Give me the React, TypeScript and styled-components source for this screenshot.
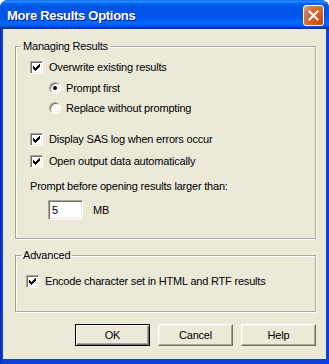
import styled, { createGlobalStyle } from "styled-components";

const GlobalStyle = createGlobalStyle`
  html, body {
    margin: 0;
    padding: 0;
    background: #ffffff;
  }
  body {
    font-family: "Liberation Sans", Arial, sans-serif;
    font-size: 11px;
    color: #000000;
  }
`;

// classic 7x7 check mark, one rect per lit pixel
const CHECK_PIXELS = [
  "......X",
  ".....XX",
  "X...XXX",
  "XX.XXX.",
  "XXXXX..",
  ".XXX...",
  "..X....",
];

function CheckGlyph() {
  return (
    <svg width="7" height="7" viewBox="0 0 7 7" shapeRendering="crispEdges">
      {CHECK_PIXELS.flatMap((row, y) =>
        row.split("").map((c, x) => (c === "X" ? <rect key={`${x}-${y}`} x={x} y={y} width="1" height="1" fill="#000" /> : null))
      )}
    </svg>
  );
}

function CheckBox({ label }: { label: string }) {
  return (
    <OptionRow>
      <Box>
        <CheckGlyph />
      </Box>
      <OptionText>{label}</OptionText>
    </OptionRow>
  );
}

function Radio({ label, checked }: { label: string; checked?: boolean }) {
  return (
    <OptionRow $indent={19}>
      <RadioCircle>{checked && <RadioDot />}</RadioCircle>
      <OptionText $gap={5}>{label}</OptionText>
    </OptionRow>
  );
}

export default function App() {
  return (
    <>
      <GlobalStyle />
      <Window>
        <TitleBar>
          <Title>More Results Options</Title>
          <CloseButton>
            <svg width="11" height="11" viewBox="0 0 11 11">
              <path d="M1.5 1.5 L9.5 9.5 M9.5 1.5 L1.5 9.5" stroke="#fff" strokeWidth="2" strokeLinecap="square" />
            </svg>
          </CloseButton>
        </TitleBar>
        <Body>
          <Group>
            <Legend>Managing Results</Legend>
            <GroupBody $padLeft={14} $padTop={7} $padBottom={18}>
              <CheckBox label="Overwrite existing results" />
              <Spacer $h={5} />
              <Radio label="Prompt first" checked />
              <Spacer $h={4} />
              <Radio label="Replace without prompting" />
              <Spacer $h={15} />
              <CheckBox label="Display SAS log when errors occur" />
              <Spacer $h={6} />
              <CheckBox label="Open output data automatically" />
              <Spacer $h={9} />
              <PlainText>Prompt before opening results larger than:</PlainText>
              <Spacer $h={6} />
              <SizeRow>
                <TextInput>5</TextInput>
                <Unit>MB</Unit>
              </SizeRow>
            </GroupBody>
          </Group>
          <Group $top={10}>
            <Legend>Advanced</Legend>
            <GroupBody $padLeft={10} $padTop={12} $padBottom={22}>
              <CheckBox label="Encode character set in HTML and RTF results" />
            </GroupBody>
          </Group>
          <ButtonRow>
            <PushButton $default>OK</PushButton>
            <PushButton>Cancel</PushButton>
            <PushButton>Help</PushButton>
          </ButtonRow>
        </Body>
      </Window>
    </>
  );
}

const Window = styled.div`
  width: 329px;
  height: 364px;
  box-sizing: border-box;
  display: flex;
  flex-direction: column;
  border-radius: 8px 8px 0 0;
  overflow: hidden;
  background: linear-gradient(90deg, #0019cf 0px, #0842d8 2px, #0842d8 100%);
`;

const TitleBar = styled.div`
  height: 29px;
  flex: 0 0 29px;
  display: flex;
  align-items: center;
  justify-content: space-between;
  padding: 0 5px 0 7px;
  box-sizing: border-box;
  background: linear-gradient(
    180deg,
    #0058ee 0%,
    #3593ff 4%,
    #288eff 6%,
    #127dff 8%,
    #036ffc 10%,
    #0262ee 14%,
    #0057e5 20%,
    #0054e3 24%,
    #0055eb 56%,
    #005bf5 66%,
    #026afe 76%,
    #0062ef 86%,
    #0052d6 92%,
    #0040ab 94%,
    #003092 100%
  );
`;

const Title = styled.div`
  font-family: "Liberation Sans", Arial, sans-serif;
  font-weight: bold;
  font-size: 13px;
  letter-spacing: -0.3px;
  color: #ffffff;
  text-shadow: 1px 1px 0 #0a1883;
  margin-top: 1px;
`;

const CloseButton = styled.div`
  width: 21px;
  height: 21px;
  box-sizing: border-box;
  border: 1px solid #ffffff;
  border-radius: 3px;
  display: flex;
  align-items: center;
  justify-content: center;
  margin-top: 2px;
  background: radial-gradient(circle at 90% 90%, #cc4600 0%, #dc6527 55%, #cd7546 70%, #e5a07c 100%);
`;

const Body = styled.div`
  flex: 1;
  margin: 0 3px 5px 3px;
  padding: 11px 10px 0 12px;
  background: #ece9d8;
  display: flex;
  flex-direction: column;
`;

const Group = styled.fieldset<{ $top?: number }>`
  margin: ${(p) => p.$top ?? 0}px 0 0 0;
  padding: 0;
  min-width: 0;
  border: 1px solid #aca899;
  box-shadow: inset 1px 1px 0 #ffffff, 1px 1px 0 #ffffff;
`;

const Legend = styled.legend`
  margin-left: 5px;
  padding: 0 2px;
  line-height: 12px;
  height: 12px;
  letter-spacing: -0.2px;
`;

const GroupBody = styled.div<{ $padLeft: number; $padTop: number; $padBottom: number }>`
  display: flex;
  flex-direction: column;
  padding: ${(p) => p.$padTop}px 0 ${(p) => p.$padBottom}px ${(p) => p.$padLeft}px;
`;

const Spacer = styled.div<{ $h: number }>`
  height: ${(p) => p.$h}px;
  flex: 0 0 auto;
`;

const OptionRow = styled.div<{ $indent?: number }>`
  height: 16px;
  display: flex;
  align-items: center;
  padding-left: ${(p) => p.$indent ?? 0}px;
`;

const Box = styled.span`
  width: 13px;
  height: 13px;
  box-sizing: border-box;
  flex: 0 0 13px;
  background: #ffffff;
  border-style: solid;
  border-width: 1px;
  border-color: #aca899 #ffffff #ffffff #aca899;
  box-shadow: inset 1px 1px 0 #716f64, inset -1px -1px 0 #f1efe2;
  display: flex;
  align-items: center;
  justify-content: center;
`;

const RadioCircle = styled.span`
  width: 12px;
  height: 12px;
  flex: 0 0 12px;
  box-sizing: border-box;
  border-radius: 50%;
  background: #ffffff;
  border: 1px solid;
  border-color: #aca899 #ffffff #ffffff #aca899;
  box-shadow: inset 1px 1px 0 #716f64, inset -1px -1px 0 #f1efe2;
  display: flex;
  align-items: center;
  justify-content: center;
`;

const RadioDot = styled.span`
  width: 4px;
  height: 4px;
  border-radius: 50%;
  background: #000000;
`;

const OptionText = styled.span<{ $gap?: number }>`
  margin-left: ${(p) => p.$gap ?? 6}px;
  white-space: nowrap;
  letter-spacing: -0.2px;
  line-height: 13px;
`;

const PlainText = styled.div`
  height: 16px;
  line-height: 16px;
  white-space: nowrap;
  letter-spacing: -0.2px;
`;

const SizeRow = styled.div`
  display: flex;
  align-items: center;
  padding-left: 18px;
`;

const TextInput = styled.div`
  width: 35px;
  height: 20px;
  box-sizing: border-box;
  background: #ffffff;
  border-style: solid;
  border-width: 1px;
  border-color: #aca899 #ffffff #ffffff #aca899;
  box-shadow: inset 1px 1px 0 #716f64, inset -1px -1px 0 #f1efe2;
  padding: 3px 0 0 3px;
  line-height: 13px;
`;

const Unit = styled.span`
  margin-left: 10px;
  letter-spacing: -0.2px;
`;

const ButtonRow = styled.div`
  display: flex;
  justify-content: flex-end;
  gap: 8px;
  margin-top: 12px;
`;

const PushButton = styled.div<{ $default?: boolean }>`
  width: 75px;
  height: 22px;
  box-sizing: border-box;
  display: flex;
  align-items: center;
  justify-content: center;
  background: #ece9d8;
  letter-spacing: -0.2px;
  border: 1px solid;
  border-color: ${(p) => (p.$default ? "#000000" : "#ffffff #716f64 #716f64 #ffffff")};
  box-shadow: ${(p) =>
    p.$default
      ? "inset 1px 1px 0 #ffffff, inset -1px -1px 0 #716f64, inset -2px -2px 0 #aca899"
      : "inset -1px -1px 0 #aca899, inset 1px 1px 0 #f1efe2"};
`;
